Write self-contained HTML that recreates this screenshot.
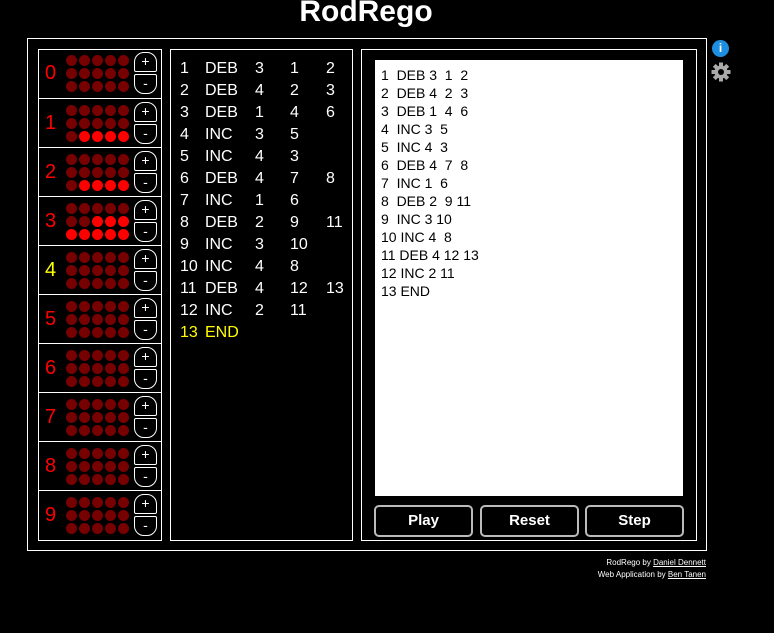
<!DOCTYPE html>
<html><head><style>
body{margin:0;background:#000;width:774px;height:633px;overflow:hidden;font-family:"Liberation Sans",sans-serif;color:#fff;position:relative}
.a{position:absolute}
h1{position:absolute;top:-5px;left:0;width:732px;text-align:center;font-size:30px;font-weight:bold;margin:0}
.box{position:absolute;border:1px solid #fff}
.reg{position:absolute;left:0;width:122px;height:48px;border-top:1px solid #fff}
.lbl{position:absolute;left:6px;top:13px;font-size:20px;color:#f00}
.d{position:absolute;width:11px;height:11px;border-radius:50%;background:#700}
.d.on{background:#f00}
.b{position:absolute;left:95px;width:21px;height:18px;border:1px solid #fff;font-size:14px;text-align:center;line-height:17px}
.p{border-radius:10px 10px 2px 2px;top:3px}
.m{border-radius:2px 2px 10px 10px;top:25px}
.pr{position:absolute;font-size:16px;line-height:22px}
.btn{position:absolute;top:505px;height:28px;border:2px solid #bbb;border-radius:5px;text-align:center;line-height:28px;font-size:15px;font-weight:bold;box-sizing:content-box}
.ft{position:absolute;right:68px;font-size:8px;text-align:right}
.ft u{text-decoration:underline}
</style></head><body>
<h1>RodRego</h1>
<div class="box" style="left:27px;top:38px;width:678px;height:511px"></div>
<div class="box" style="left:38px;top:49px;width:122px;height:490px" id="regs"></div>
<div class="box" style="left:170px;top:49px;width:181px;height:490px"></div>
<div class="box" style="left:361px;top:49px;width:334px;height:490px"></div>
<div class="a" style="left:375px;top:60px;width:308px;height:436px;background:#fff;color:#000;font-size:14px;line-height:18px;padding:6px 0 0 6px;box-sizing:border-box;white-space:pre">1  DEB 3  1  2
2  DEB 4  2  3
3  DEB 1  4  6
4  INC 3  5
5  INC 4  3
6  DEB 4  7  8
7  INC 1  6
8  DEB 2  9 11
9  INC 3 10
10 INC 4  8
11 DEB 4 12 13
12 INC 2 11
13 END</div>
<div class="btn" style="left:374px;width:95px">Play</div>
<div class="btn" style="left:480px;width:95px">Reset</div>
<div class="btn" style="left:585px;width:95px">Step</div>
<div class="a" style="left:712px;top:40px;width:17px;height:17px;border-radius:50%;background:#1e8fe0;color:#fff;font-size:12px;font-weight:bold;text-align:center;line-height:17px">i</div>
<svg class="a" style="left:711px;top:62px" width="20" height="20" viewBox="0 0 20 20"><g fill="#aaa" transform="translate(10 10)"><circle r="6.5"/><rect x="-2" y="-9.5" width="4" height="19"/><rect x="-2" y="-9.5" width="4" height="19" transform="rotate(45)"/><rect x="-2" y="-9.5" width="4" height="19" transform="rotate(90)"/><rect x="-2" y="-9.5" width="4" height="19" transform="rotate(135)"/></g><circle cx="10" cy="10" r="3" fill="#000"/></svg>
<div class="ft" style="top:558px">RodRego by <u>Daniel Dennett</u></div>
<div class="ft" style="top:570px">Web Application by <u>Ben Tanen</u></div>
<div id="prog"></div>
<script>
var vals=[0,4,4,8,0,0,0,0,0,0],h='';
for(var r=0;r<10;r++){
 h+='<div class="reg" style="top:'+(r*49-1)+'px;'+(r==0?'border-top:none':'')+'"><div class="lbl" style="'+(r==4?'color:#ff0':'')+'">'+r+'</div>';
 for(var i=0;i<15;i++){var row=Math.floor(i/5),col=i%5;var idx=(2-row)*5+(4-col);var on=idx<vals[r];
 h+='<div class="d'+(on?' on':'')+'" style="left:'+(27+col*13)+'px;top:'+(6+row*13)+'px"></div>';}
 h+='<div class="b p">+</div><div class="b m">-</div></div>';}
document.getElementById('regs').innerHTML=h;
var P=[[1,'DEB',3,1,2],[2,'DEB',4,2,3],[3,'DEB',1,4,6],[4,'INC',3,5,''],[5,'INC',4,3,''],[6,'DEB',4,7,8],[7,'INC',1,6,''],[8,'DEB',2,9,11],[9,'INC',3,10,''],[10,'INC',4,8,''],[11,'DEB',4,12,13],[12,'INC',2,11,''],[13,'END','','','']];
var xs=[180,205,255,290,326],g='';
P.forEach(function(l,k){var c=k==12?'#ff0':'#fff';l.forEach(function(v,j){g+='<div class="pr" style="left:'+xs[j]+'px;top:'+(58+k*22)+'px;color:'+c+'">'+v+'</div>';});});
document.getElementById('prog').innerHTML=g;
</script>
</body></html>
